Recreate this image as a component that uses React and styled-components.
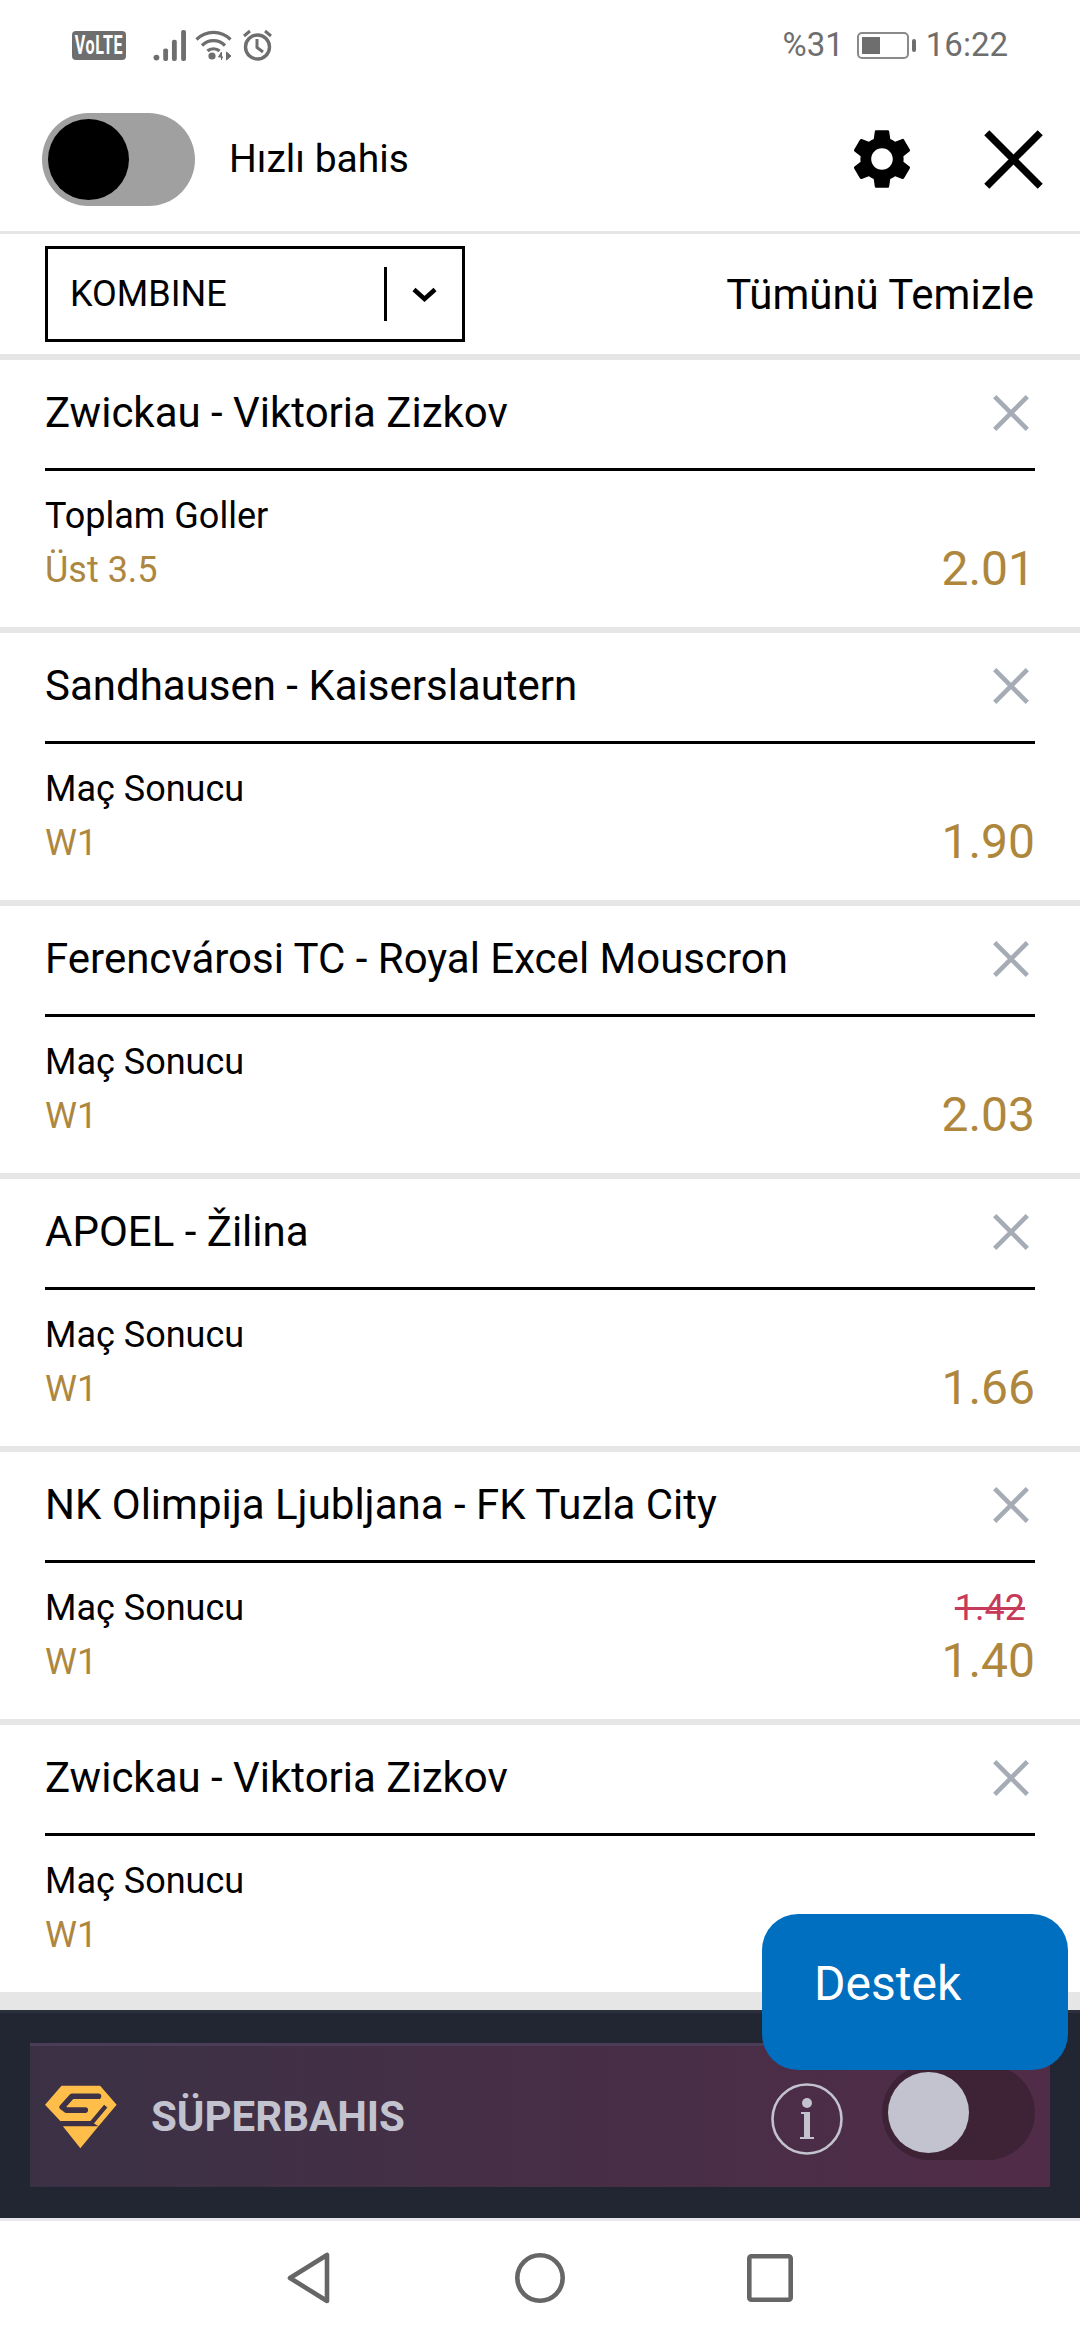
import React from 'react';
import styled, { createGlobalStyle } from 'styled-components';
import { MdSettings } from 'react-icons/md';

const GlobalStyle = createGlobalStyle`
html, body {
  margin: 0;
  padding: 0;
  background: #fff;
  font-family: Roboto, "Noto Sans", sans-serif;
}
* { box-sizing: border-box; }
`;

const Page = styled.div`
position: relative;
width: 1080px;
height: 2340px;
display: flex;
flex-direction: column;
overflow: hidden;
background: #e6e6e6;
`;

const StatusBar = styled.div`
height: 90px;
flex: none;
display: flex;
align-items: center;
padding: 0 72px 0 72px;
background: #fff;
color: #6e6e6e;
`;

const Volte = styled.div`
width: 54px;
height: 29px;
flex: none;
border-radius: 4px;
background: #6e6e6e;
color: #fff;
display: flex;
align-items: center;
justify-content: center;
font-size: 26px;
font-weight: 700;
overflow: hidden;
margin-right: 27px;
span { flex: none; transform: scaleX(.62); letter-spacing: 1px; }
`;

const StatusIcons = styled.div`
display: flex;
align-items: center;
gap: 8px;
`;

const StatusRight = styled.div`
margin-left: auto;
display: flex;
align-items: center;
gap: 13px;
font-size: 33px;
line-height: 40px;
`;

const Battery = styled.div`
position: relative;
width: 52px;
height: 27px;
border: 2px solid #8a8a8a;
border-radius: 5px;
padding: 3px;
margin-right: 4px;
&::before {
  content: '';
  display: block;
  width: 18px;
  height: 100%;
  background: #6e6e6e;
}
&::after {
  content: '';
  position: absolute;
  right: -9px;
  top: 5px;
  width: 4px;
  height: 13px;
  border-radius: 2px;
  background: #6e6e6e;
}
`;

const Header = styled.div`
height: 144px;
flex: none;
display: flex;
align-items: center;
padding: 0 37px 3px 42px;
background: #fff;
border-bottom: 3px solid #e6e6e6;
`;

const QuickToggle = styled.div`
width: 153px;
height: 93px;
border-radius: 47px;
background: #a0a0a0;
padding: 6px;
&::before {
  content: '';
  display: block;
  width: 81px;
  height: 81px;
  border-radius: 50%;
  background: #000;
}
`;

const HeaderLabel = styled.div`
margin-left: 34px;
font-size: 39px;
color: #000;
`;

const HeaderIcons = styled.div`
margin-left: auto;
display: flex;
align-items: center;
gap: 66px;
`;

const SubBar = styled.div`
height: 120px;
flex: none;
display: flex;
align-items: center;
justify-content: space-between;
padding: 0 46px 0 45px;
background: #fff;
margin-bottom: 6px;
`;

const Select = styled.div`
width: 420px;
height: 96px;
border: 3px solid #000;
display: flex;
align-items: center;
padding-left: 22px;
font-size: 36px;
color: #000;
`;

const SelectDivider = styled.div`
width: 3px;
height: 54px;
background: #000;
margin-left: auto;
`;

const SelectArrow = styled.div`
width: 75px;
display: flex;
justify-content: center;
`;

const ClearAll = styled.div`
font-size: 42px;
color: #000;
`;

const List = styled.div`
flex: 1;
min-height: 0;
overflow: hidden;
`;

const Card = styled.div`
height: 267px;
margin-bottom: 6px;
padding: 0 45px;
background: #fff;
`;

const CardHead = styled.div`
height: 111px;
display: flex;
align-items: center;
justify-content: space-between;
padding: 0 6px 3px 0;
border-bottom: 3px solid #000;
`;

const Title = styled.div`
font-size: 42px;
color: #000;
`;

const Row = styled.div`
display: flex;
align-items: center;
justify-content: space-between;
height: 52px;
`;

const MarketRow = styled(Row)`
margin-top: 19px;
`;

const PickRow = styled(Row)`
margin-top: 2px;
`;

const Market = styled.div`
font-size: 36px;
color: #000;
`;

const Pick = styled.div`
font-size: 36px;
color: #ad873f;
`;

const OldOdd = styled.div`
font-size: 36px;
color: #c73a5a;
text-decoration: line-through;
margin-right: 10px;
`;

const Odd = styled.div`
font-size: 48px;
margin-top: -3px;
color: #ae873c;
`;

const Support = styled.div`
position: absolute;
left: 762px;
top: 1914px;
width: 306px;
height: 156px;
padding: 42px 0 0 52px;
border-radius: 36px;
background: #006fbf;
color: #fff;
font-size: 48px;
line-height: 56px;
`;

const Footer = styled.div`
height: 208px;
flex: none;
padding: 30px 30px 0;
background: #222632;
border-top: 3px solid #2c303d;
`;

const SuperPanel = styled.div`
height: 144px;
display: flex;
align-items: center;
padding: 0 15px;
background: linear-gradient(90deg, #3b3145, #512c48);
border-top: 3px solid #4a3d55;
`;

const SuperLabel = styled.div`
margin-left: 34px;
font-size: 42px;
font-weight: 700;
color: #c2c3ce;
`;

const InfoWrap = styled.div`
margin-left: auto;
margin-top: 4px;
display: flex;
`;

const SuperToggle = styled.div`
width: 153px;
height: 95px;
margin: 0 0 9px 39px;
border-radius: 48px;
background: #3e2337;
padding: 7px 6px;
&::before {
  content: '';
  display: block;
  width: 81px;
  height: 81px;
  border-radius: 50%;
  background: #c2c3ce;
}
`;

const NavBar = styled.div`
height: 122px;
flex: none;
display: flex;
align-items: center;
justify-content: center;
padding-bottom: 5px;
background: #fff;
border-top: 3px solid #e6e6ec;
`;

const NavSlot = styled.div`
width: 231px;
display: flex;
justify-content: center;
`;

const RecentSlot = styled(NavSlot)`
padding-right: 3px;
`;

const bets = [
  { id: 1, title: 'Zwickau - Viktoria Zizkov', market: 'Toplam Goller', pick: 'Üst 3.5', odd: '2.01' },
  { id: 2, title: 'Sandhausen - Kaiserslautern', market: 'Maç Sonucu', pick: 'W1', odd: '1.90' },
  { id: 3, title: 'Ferencvárosi TC - Royal Excel Mouscron', market: 'Maç Sonucu', pick: 'W1', odd: '2.03' },
  { id: 4, title: 'APOEL - Žilina', market: 'Maç Sonucu', pick: 'W1', odd: '1.66' },
  { id: 5, title: 'NK Olimpija Ljubljana - FK Tuzla City', market: 'Maç Sonucu', pick: 'W1', odd: '1.40', oldOdd: '1.42' },
  { id: 6, title: 'Zwickau - Viktoria Zizkov', market: 'Maç Sonucu', pick: 'W1' },
];

function CloseIcon({ size, color, width }) {
  return (
    <svg width={size} height={size} viewBox="0 0 36 36">
      <path d="M1.7 1.7 L34.3 34.3 M34.3 1.7 L1.7 34.3" stroke={color} strokeWidth={width} fill="none" />
    </svg>
  );
}

function SignalIcon() {
  return (
    <svg width="34" height="31" viewBox="0 0 34 32">
      <g fill="#6e6e6e">
        <circle cx="3" cy="28.5" r="3" />
        <rect x="10" y="19" width="5" height="13" rx="2" />
        <rect x="19" y="10" width="5" height="22" rx="2" />
        <rect x="28.5" y="0" width="5" height="32" rx="2" />
      </g>
    </svg>
  );
}

function WifiIcon() {
  return (
    <svg width="37" height="32" viewBox="0 0 37 32">
      <g fill="none" stroke="#6e6e6e" strokeWidth="3.2">
        <path d="M1.5 10.5 C11 1 26 1 35.5 10.5" />
        <path d="M7 16.5 C13.5 10 23.5 10 30 16.5" />
        <path d="M12.5 22 C15.5 19 21.5 19 24.5 22" />
      </g>
      <circle cx="17" cy="27" r="3.6" fill="#6e6e6e" />
      <path d="M26.5 31 V23 L23.5 28 H28 M31.5 23 V31 L36 27 Z" fill="#6e6e6e" stroke="#6e6e6e" strokeWidth="1" />
    </svg>
  );
}

function AlarmIcon() {
  return (
    <svg width="31" height="32" viewBox="0 0 31 32" style={{ marginLeft: 2 }}>
      <g fill="none" stroke="#6e6e6e">
        <circle cx="15.5" cy="18" r="12" strokeWidth="3.4" />
        <path d="M15 10 V18.5 L21 23" strokeWidth="3" />
        <path d="M2 7 L8 2 M29 7 L23 2" strokeWidth="3" />
      </g>
    </svg>
  );
}

function LogoIcon() {
  return (
    <svg width="72" height="64" viewBox="28 30 218 194">
      <path d="M28 90 L78 32 H195 L245 90 L190 155 L135 222 L82 155 H190 L165 140 H75 Z" fill="#ffbd4a" />
      <path d="M190 64 H110 L80 97 L92 106 H150" fill="none" stroke="#3c3146" strokeWidth="17" strokeLinecap="round" strokeLinejoin="round" />
      <path d="M212 94 L168 146 H76" fill="none" stroke="#3c3146" strokeWidth="13" strokeLinejoin="round" />
    </svg>
  );
}

function InfoIcon() {
  return (
    <svg width="72" height="72" viewBox="0 0 72 72">
      <circle cx="36" cy="36" r="34.5" fill="none" stroke="#c2c3ce" strokeWidth="2.6" />
      <circle cx="36" cy="20" r="5" fill="#c2c3ce" />
      <path d="M30 29 H39 V54 H43 V56 H29 V54 H33 V31 H30 Z" fill="#c2c3ce" />
    </svg>
  );
}

function NavBack() {
  return (
    <svg width="44" height="52" viewBox="0 0 44 52">
      <path d="M40 3 V49 L3 26 Z" fill="none" stroke="#666" strokeWidth="4.6" strokeLinejoin="round" />
    </svg>
  );
}

function NavHome() {
  return (
    <svg width="50" height="50" viewBox="0 0 50 50">
      <circle cx="25" cy="25" r="22.7" fill="none" stroke="#666" strokeWidth="4.6" />
    </svg>
  );
}

function NavRecent() {
  return (
    <svg width="46" height="48" viewBox="0 0 46 48">
      <rect x="2.3" y="2.3" width="41.4" height="43.4" rx="2" fill="none" stroke="#666" strokeWidth="4.6" />
    </svg>
  );
}

function BetCard({ bet }) {
  return (
    <Card>
      <CardHead>
        <Title>{bet.title}</Title>
        <CloseIcon size={36} color="#a5acb5" width={4.6} />
      </CardHead>
      <MarketRow>
        <Market>{bet.market}</Market>
        {bet.oldOdd && <OldOdd>{bet.oldOdd}</OldOdd>}
      </MarketRow>
      <PickRow>
        <Pick>{bet.pick}</Pick>
        {bet.odd && <Odd>{bet.odd}</Odd>}
      </PickRow>
    </Card>
  );
}

function App() {
  return (
    <Page>
      <GlobalStyle />
      <StatusBar>
        <Volte><span>VoLTE</span></Volte>
        <StatusIcons>
          <SignalIcon />
          <WifiIcon />
          <AlarmIcon />
        </StatusIcons>
        <StatusRight>
          <span>%31</span>
          <Battery />
          <span>16:22</span>
        </StatusRight>
      </StatusBar>

      <Header>
        <QuickToggle />
        <HeaderLabel>Hızlı bahis</HeaderLabel>
        <HeaderIcons>
          <MdSettings size={72} color="#000" />
          <CloseIcon size={59} color="#000" width={4.4} />
        </HeaderIcons>
      </Header>

      <SubBar>
        <Select>
          KOMBINE
          <SelectDivider />
          <SelectArrow>
            <svg width="25" height="15" viewBox="0 0 25 15">
              <path d="M2 2.5 L12.5 12 L23 2.5" fill="none" stroke="#000" strokeWidth="4.5" />
            </svg>
          </SelectArrow>
        </Select>
        <ClearAll>Tümünü Temizle</ClearAll>
      </SubBar>

      <List>
        {bets.map((bet) => <BetCard key={bet.id} bet={bet} />)}
      </List>

      <Footer>
        <SuperPanel>
          <LogoIcon />
          <SuperLabel>SÜPERBAHIS</SuperLabel>
          <InfoWrap><InfoIcon /></InfoWrap>
          <SuperToggle />
        </SuperPanel>
      </Footer>

      <NavBar>
        <NavSlot><NavBack /></NavSlot>
        <NavSlot><NavHome /></NavSlot>
        <RecentSlot><NavRecent /></RecentSlot>
      </NavBar>

      <Support>Destek</Support>
    </Page>
  );
}

export default App;
